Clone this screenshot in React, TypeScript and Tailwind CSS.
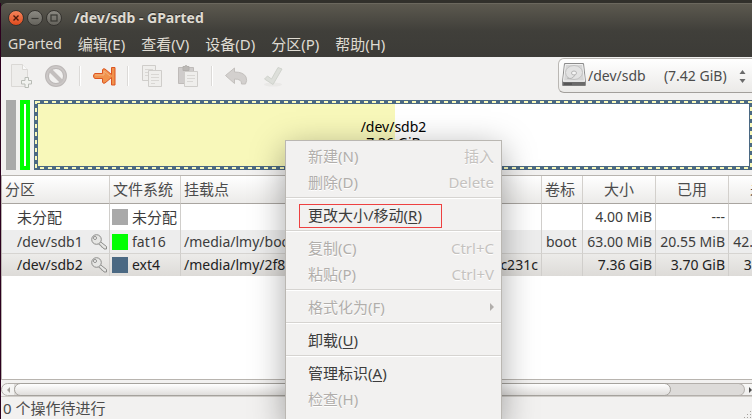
import type { ReactNode } from 'react';

interface Partition {
  name: string;
  locked: boolean;
  fs: string;
  swatch: string;
  mount: string;
  label: string;
  size: string;
  used: string;
  unused: string;
}

const PARTITIONS: Partition[] = [
  { name: '未分配', locked: false, fs: '未分配', swatch: 'bg-[#a9a9a9]', mount: '', label: '', size: '4.00 MiB', used: '---', unused: '---' },
  { name: '/dev/sdb1', locked: true, fs: 'fat16', swatch: 'bg-[#00ff00]', mount: '/media/lmy/boot', label: 'boot', size: '63.00 MiB', used: '20.55 MiB', unused: '42.45 MiB' },
  { name: '/dev/sdb2', locked: true, fs: 'ext4', swatch: 'bg-[#4b6983]', mount: '/media/lmy/2f8d183b-60d4-4b7d-95d2-d8b0473c231c', label: '', size: '7.36 GiB', used: '3.70 GiB', unused: '3.66 GiB' },
];

const MENUS = ['编辑(E)', '查看(V)', '设备(D)', '分区(P)', '帮助(H)'];

const HEADERS = ['分区', '文件系统', '挂载点', '卷标', '大小', '已用', '未用'];

const USED_RATIO = 3.7 / 7.36;

export default function App() {
  return (
    <div className="h-screen flex flex-col overflow-hidden bg-[#2c001e] pl-px relative font-['Noto_Sans','Noto_Sans_CJK_SC',sans-serif] text-sm text-[#3c3c3c]">
      <div className="h-[3px] shrink-0 -ml-px bg-[#31302b]" />
      <TitleBar />
      <MenuBar />
      <div className="flex-1 min-h-0 flex flex-col bg-[#f2f1f0]">
        <Toolbar />
        <DiskMap />
        <PartitionList />
        <ScrollBar />
        <div className="h-[23px] shrink-0 flex items-center justify-between pl-0.5 pt-px border-t border-[#d0cdc9] text-[15px] text-[#4c4c4c]">
          <span>0 个操作待进行</span>
          <svg width="8" height="8" className="self-end" fill="#a5a29e">
            <path d="M6 0h1v1H6zM3 3h1v1H3zM6 3h1v1H6zM0 6h1v1H0zM3 6h1v1H3zM6 6h1v1H6z" />
          </svg>
        </div>
      </div>
      <ContextMenu />
    </div>
  );
}

function TitleBar() {
  return (
    <header className="bg-[#31302b] shrink-0">
      <div className="h-7 flex items-center pl-[7px] rounded-tl-md border-t border-[#6b685e] bg-linear-to-b from-[#5c594f] to-[#403f3a]">
        <div className="flex gap-[3px]">
          <button aria-label="关闭" className="size-4 rounded-full border border-[#35332f] bg-linear-to-b from-[#f58359] to-[#df4a1b]">
            <svg viewBox="0 0 14 14" className="size-full" fill="none" stroke="#4a1a0b" strokeWidth="1.4">
              <path d="M4.5 4.5l5 5M9.5 4.5l-5 5" />
            </svg>
          </button>
          <button aria-label="最小化" className="size-4 rounded-full border border-[#35332f] bg-linear-to-b from-[#8b8982] to-[#65635c]">
            <svg viewBox="0 0 14 14" className="size-full" fill="none" stroke="#383732" strokeWidth="1.2">
              <path d="M3.5 7.5h7" />
            </svg>
          </button>
          <button aria-label="最大化" className="size-4 rounded-full border border-[#35332f] bg-linear-to-b from-[#8b8982] to-[#65635c]">
            <svg viewBox="0 0 14 14" className="size-full" fill="none" stroke="#383732" strokeWidth="1.2">
              <rect x="4" y="4" width="6" height="6" />
            </svg>
          </button>
        </div>
        <h1 className="ml-3 text-sm font-bold text-[#dfdbd2] whitespace-nowrap [text-shadow:0_-1px_0_#2b2a26]">/dev/sdb - GParted</h1>
      </div>
    </header>
  );
}

function MenuBar() {
  return (
    <nav className="h-[26px] shrink-0 flex items-center gap-4 pl-[7px] bg-linear-to-b from-[#403f3a] to-[#3c3b37] text-[#dfdbd2] leading-5 whitespace-nowrap">
      <button>GParted</button>
      {MENUS.map(m => (
        <button key={m} className="text-[15px]">{m}</button>
      ))}
    </nav>
  );
}

function Toolbar() {
  return (
    <div className="h-[43px] shrink-0 flex items-start pt-px pl-[7px]">
      <div className="flex items-center h-9">
        <div className="flex gap-3">
          <Tool label="新建">
            <path d="M3.500.500h11l5 5v17h-16z" fill="#eeedeb" stroke="#dad8d5" />
            <path d="M14.500.500v5h5" fill="#fafafa" stroke="#dad8d5" />
            <path d="M17 13.500h3.500v3h3v3.500h-3v3.500H17V20h-3.500v-3.500H17z" fill="#f1f2ef" stroke="#b9bcb6" />
          </Tool>
          <Tool label="删除">
            <circle cx="12" cy="12" r="9" fill="none" stroke="#bcb8b7" strokeWidth="4" />
            <circle cx="12" cy="12" r="9" fill="none" stroke="#cbc7c6" strokeWidth="2" />
            <path d="M6 6l12 12" stroke="#c3bfbe" strokeWidth="4" />
          </Tool>
        </div>
        <Divider />
        <Tool label="更改大小/移动">
          <path d="M3 9.500h7.500V6q.5-2 2.500-1l6.500 5.500V3.500h3.500v17.500h-3.500v-7.500L13 19q-2 1-2.500-1v-3.500H3q-1.500-.5-1.500-2.500T3 9.500z" fill="#f0924c" stroke="#dc5420" strokeLinejoin="round" />
          <path d="M3 11h9V7l6 5" fill="none" stroke="#f6b27c" />
        </Tool>
        <Divider />
        <div className="flex gap-3">
          <Tool label="复制">
            <g fill="#efeeec" stroke="#cfcdca">
              <path d="M2.500 1.500h13v15h-13z" />
              <path d="M8.500 6.500h13v16h-13z" />
            </g>
            <path d="M5 5.500h8M5 8.500h3M5 11.500h3M11 10.500h8M11 13.500h8M11 16.500h8M11 19.500h4" stroke="#d9d7d4" />
          </Tool>
          <Tool label="粘贴">
            <path d="M2.500 3.500h15v16h-15z" fill="#cfcccb" stroke="#bfbbb9" />
            <path d="M7 2.500h2q0-1 1-1t1 1h2v4H7z" fill="#bbb8b5" stroke="#b3b0ad" />
            <path d="M8.500 7.500h13v15h-13z" fill="#efeeec" stroke="#cfcdca" />
            <path d="M11 11.500h8M11 14.500h8M11 17.500h6" stroke="#d9d7d4" />
          </Tool>
        </div>
        <Divider />
        <div className="flex gap-3">
          <Tool label="撤销">
            <path d="M1.500 11.500L10.500 4v4q9 0 11.500 5 1.500 3.500-.5 7h-4q.5-5-7-5v4.500z" fill="#d3d0ce" stroke="#c3c0bd" strokeLinejoin="round" />
          </Tool>
          <Tool label="应用">
            <ellipse cx="13" cy="20.500" rx="9" ry="2" fill="#eae9e7" />
            <path d="M4.500 15l3-3 4 3L18 3.500l4 1.500-9 15.500z" fill="#dddfda" stroke="#d0d3cd" strokeLinejoin="round" />
          </Tool>
        </div>
      </div>
      <div className="relative ml-auto -mr-1.5 w-[200px]">
        <select
          aria-label="设备"
          className="appearance-none w-full h-[35px] pl-[29px] rounded-md border border-[#bab7b3] border-b-[#a29f9b] bg-linear-to-b from-white to-[#ebeae8] text-sm text-[#4c4c4c]"
        >
          <option>/dev/sdb{'\u00a0\u00a0\u00a0\u00a0\u00a0'}(7.42 GiB)</option>
        </select>
        <svg className="absolute left-1 top-[5px] pointer-events-none" width="24" height="24" viewBox="0 0 24 24">
          <path d="M2.500.5h19L23.500 19v3.500H.5V19z" fill="#d9d9d9" stroke="#8c8c8c" />
          <path d="M3.500 1.500h17L22.500 18h-21z" fill="#d6d6d6" stroke="#f0f0f0" />
          <ellipse cx="12" cy="9.500" rx="8.500" ry="7" fill="#e2e2e2" stroke="#c2c2c2" />
          <ellipse cx="12" cy="10" rx="2.500" ry="2" fill="#f4f4f4" stroke="#b4b4b4" />
          <path d="M5 15q5 2 8-3" fill="none" stroke="#b4b4b4" />
          <path d="M1 19h22v3.500H1z" fill="#6a6a6a" />
          <path d="M3 20v2M5 20v2M7 20v2M9 20v2" stroke="#444" />
        </svg>
        <svg className="absolute right-3 top-3 pointer-events-none" width="7" height="13" fill="#6a6a6a">
          <path d="M.5 4h6l-3-4zM.5 9h6l-3 4z" />
        </svg>
      </div>
    </div>
  );
}

function Tool({ label, children }: { label: string; children: ReactNode }) {
  return (
    <button aria-label={label} className="size-6">
      <svg viewBox="0 0 24 24" className="size-6">{children}</svg>
    </button>
  );
}

function Divider() {
  return <div className="w-0.5 h-5 mx-[11px] bg-[#dcdad8] border-r border-white" />;
}

/* Graphical view of the disk, one block per partition */
function DiskMap() {
  return (
    <div className="h-[70px] shrink-0 flex gap-1 pl-[5px] -mr-px">
      <div className="w-2.5 bg-[#a9a9a9]" />
      <div className="w-2.5 border-4 border-[#00ff00] bg-white" />
      <div className="relative flex-1 border-4 border-[#4b6983] bg-white">
        <div className="h-full bg-[#f8f8ba]" style={{ width: `${USED_RATIO * 100}%` }} />
        <svg className="absolute -inset-1 w-[calc(100%+8px)] h-[70px]">
          <rect x="2" y="2" className="w-[calc(100%-4px)] h-[66px]" fill="none" stroke="#f8f8ba" strokeWidth="2" strokeDasharray="4 4" />
        </svg>
        <div className="absolute inset-0 pt-[15px] text-center leading-4 text-black">
          <div>/dev/sdb2</div>
          <div>7.36 GiB</div>
        </div>
      </div>
    </div>
  );
}

function PartitionList() {
  return (
    <div className="flex-1 min-h-0 mt-[5px] border border-r-0 border-[#b8b4af] bg-white overflow-hidden">
      <table className="w-[calc(100%+50px)] table-fixed border-separate border-spacing-0 whitespace-nowrap">
        <colgroup>
          <col className="w-[108px]" />
          <col className="w-[71px]" />
          <col />
          <col className="w-[41px]" />
          <col className="w-[73px]" />
          <col className="w-[73px]" />
          <col className="w-[73px]" />
        </colgroup>
        <thead>
          <tr className="h-7 bg-linear-to-b from-white to-[#ebeae8] text-[15px] text-[#4c4c4c]">
            {HEADERS.map((h, i) => (
              <th
                key={h}
                className={`p-0 px-[3px] font-normal border-r border-b border-r-[#d3d0cc] border-b-[#a9a5a0] ${i < 4 ? 'text-left' : 'text-center'}`}
              >
                {h}
              </th>
            ))}
          </tr>
        </thead>
        <tbody>
          {PARTITIONS.map((p, i) => (
            <Row key={p.name} part={p} index={i} />
          ))}
        </tbody>
      </table>
    </div>
  );
}

const ROW_STYLES = [
  'h-[26px] bg-white text-[#3c3c3c]',
  'h-[23px] bg-[#ededed] text-[#3c3c3c]',
  'h-[23px] bg-linear-to-b from-[#edecea] to-[#dddbd8] text-[#222]',
];

function Row({ part, index }: { part: Partition; index: number }) {
  const cell = `p-0 px-[3px] border-r border-[#d0cecb] leading-5 ${index === 2 ? 'border-t border-t-[#d6d4d1]' : ''}`;
  const cjk = index === 0 ? 'text-[15px]' : '';
  return (
    <tr className={ROW_STYLES[index]}>
      <td className={`${cell} ${cjk}`}>
        <div className="flex items-center justify-between pl-3 -mr-0.5">
          {part.name}
          {part.locked && <KeyIcon />}
        </div>
      </td>
      <td className={`${cell} ${cjk}`}>
        <div className="flex items-center gap-1 -ml-px">
          <span className={`size-4 shrink-0 ${part.swatch}`} />
          {part.fs}
        </div>
      </td>
      <td className={cell}>{part.mount}</td>
      <td className={`${cell} pl-1`}>{part.label}</td>
      <td className={`${cell} text-right`}>{part.size}</td>
      <td className={`${cell} text-right`}>{part.used}</td>
      <td className={`${cell} text-right`}>{part.unused}</td>
    </tr>
  );
}

function KeyIcon() {
  return (
    <svg width="17" height="16" viewBox="0 0 17 16" fill="none" strokeLinejoin="round">
      <path d="M8.500 7L15.500 12.500V15H13l-1-1.500-1.500-.5-.5-1.500-2-1-1.500-1.500" fill="#e6e6e4" stroke="#8d8d8b" />
      <circle cx="5.500" cy="5.500" r="4.800" fill="#e6e6e4" stroke="#8d8d8b" />
      <circle cx="4" cy="4" r="1.500" fill="#fff" stroke="#8d8d8b" />
    </svg>
  );
}

function ScrollBar() {
  return (
    <div className="mt-[3px] h-[13px] shrink-0 -mr-3 flex border border-[#b3afab] rounded-full bg-linear-to-b from-[#f8f8f7] to-[#f0efee]">
      <button aria-label="向左滚动" className="w-3 flex items-center justify-center">
        <svg width="3" height="6" fill="#a3a09c"><path d="M3 0v6L0 3z" /></svg>
      </button>
      <div className="flex-1 -my-px rounded-r-full border border-[#b3afab] border-l-0 bg-[#dddbd9]">
        <div className="w-[90%] h-[13px] -mt-px rounded-full border border-[#a5a29d] bg-linear-to-b from-white to-[#e0dedc]" />
      </div>
      <button aria-label="向右滚动" className="w-[18px] pl-1 flex items-center">
        <svg width="3" height="6" fill="#4c4c4c"><path d="M0 0v6l3-3z" /></svg>
      </button>
    </div>
  );
}

function ContextMenu() {
  return (
    <div
      role="menu"
      className="absolute left-[285px] top-[140px] w-[217px] pt-0.5 pb-3 border border-[#bab7b2] bg-[#f2f1f0] shadow-[0_8px_32px_rgba(0,0,0,0.35)]"
    >
      <MenuItem text="新建" accel="N" hint="插入" disabled />
      <MenuItem text="删除" accel="D" hint="Delete" disabled />
      <Separator />
      <MenuItem text="更改大小/移动" accel="R" marked />
      <Separator />
      <MenuItem text="复制" accel="C" hint="Ctrl+C" disabled />
      <MenuItem text="粘贴" accel="P" hint="Ctrl+V" disabled />
      <Separator />
      <MenuItem text="格式化为" accel="F" submenu disabled />
      <Separator />
      <MenuItem text="卸载" accel="U" />
      <Separator />
      <MenuItem text="管理标识" accel="A" />
      <MenuItem text="检查" accel="H" disabled />
    </div>
  );
}

interface MenuItemProps {
  text: string;
  accel: string;
  hint?: string;
  disabled?: boolean;
  marked?: boolean;
  submenu?: boolean;
}

function MenuItem({ text, accel, hint, disabled, marked, submenu }: MenuItemProps) {
  const color = disabled ? 'text-[#b1aeab] [text-shadow:0_1px_0_#fff]' : 'text-[#3c3c3c]';
  return (
    <button
      role="menuitem"
      disabled={disabled}
      className={`relative w-full h-[26px] pl-[22px] pr-[7px] flex items-center justify-between text-[15px] leading-5 whitespace-nowrap ${color}`}
    >
      <span>
        {text}({disabled ? accel : <u className="underline-offset-2">{accel}</u>})
      </span>
      {hint && <span className="text-[#c5c2bf]">{hint}</span>}
      {submenu && <svg width="4" height="8" fill="#b1aeab"><path d="M0 0v8l4-4z" /></svg>}
      {marked && <span className="absolute left-[13px] top-0.5 w-[143px] h-6 border border-[#ee4040]" />}
    </button>
  );
}

function Separator() {
  return <div className="h-[7px] pt-0.5"><div className="h-0.5 bg-[#d6d4d1] border-b border-white" /></div>;
}
